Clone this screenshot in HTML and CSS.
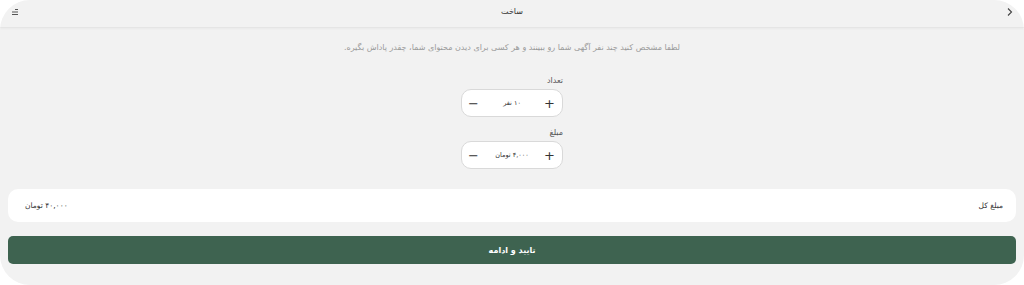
FILE: index.html
```html
<!DOCTYPE html>
<html lang="fa" dir="rtl">
<head>
<meta charset="utf-8">
<link rel="stylesheet" href="styles.css">
</head>
<body>
<div class="panel">
  <header class="header">
    <div class="hside hstart">
      <svg width="10" height="10" viewBox="0 0 10 10"><path d="M2 3.5l3.5 3.5L2 10.5" transform="translate(1,-2)" fill="none" stroke="#444" stroke-width="1.1"/></svg>
    </div>
    <div class="title">ساخت</div>
    <div class="hside hend">
      <svg width="10" height="10" viewBox="0 0 10 10"><path d="M6 2.5h3M3 5h6M3 7.5h6" stroke="#555" stroke-width="1.1"/></svg>
    </div>
  </header>
  <p class="desc">لطفا مشخص کنید چند نفر آگهی شما رو ببینند و هر کسی برای دیدن محتوای شما، چقدر پاداش بگیره.</p>
  <div class="field">
    <div class="label">تعداد</div>
    <div class="stepper">
      <span class="btn">+</span>
      <span class="val">۱۰ نفر</span>
      <span class="btn">−</span>
    </div>
  </div>
  <div class="field second">
    <div class="label">مبلغ</div>
    <div class="stepper">
      <span class="btn">+</span>
      <span class="val">۴,۰۰۰ تومان</span>
      <span class="btn">−</span>
    </div>
  </div>
  <div class="total">
    <span>مبلغ کل</span>
    <span>۴۰,۰۰۰ تومان</span>
  </div>
  <button class="submit">تایید و ادامه</button>
</div>
</body>
</html>
```
FILE: styles.css
```css
* { box-sizing: border-box; }
html, body { margin: 0; padding: 0; background: #ffffff; }
body { width: 1024px; height: 285px; overflow: hidden; font-family: "DejaVu Sans", sans-serif; color: #333; }
.panel {
  width: 1024px; height: 285px; background: #f2f2f2; border-radius: 30px;
  overflow: hidden; direction: rtl; display: flex; flex-direction: column;
}
.header {
  height: 28px; flex: none; display: grid; grid-template-columns: 1fr auto 1fr;
  align-items: center; padding: 0 9px; border-bottom: 1px solid #e5e5e5;
  box-shadow: 0 1px 2px rgba(0,0,0,0.04);
}
.hside { display: flex; align-items: center; }
.hend { justify-content: flex-end; }
.title { font-size: 8px; color: #333; padding-bottom: 4px; }
.hside svg { margin-top: -4px; }
.desc { margin: 15px 0 0; text-align: center; font-size: 8px; color: #9a9a9a; }
.field { width: 102px; margin: 24px auto 0; display: flex; flex-direction: column; gap: 4px; }
.field.second { margin-top: 11px; }
.label { font-size: 8px; color: #555; text-align: right; font-weight: normal; }
.stepper {
  height: 28px; background: #fff; border: 1px solid #d9d9d9; border-radius: 10px;
  display: flex; align-items: center; justify-content: space-between; padding: 0 7px;
}
.btn { font-size: 13px; color: #333; line-height: 1; width: 10px; text-align: center; }
.val { font-size: 6.5px; color: #333; }
.total {
  margin: 20px 8px 0; height: 33px; background: #fff; border-radius: 10px;
  display: flex; align-items: center; justify-content: space-between; padding: 0 13px 0 17px;
  font-size: 7.5px; color: #333;
}
.submit {
  margin: 14px 8px 0; height: 28px; background: #3e6350; color: #fff; border: none;
  border-radius: 5px; font-family: "DejaVu Sans", sans-serif; font-size: 8px; font-weight: bold;
}
```
